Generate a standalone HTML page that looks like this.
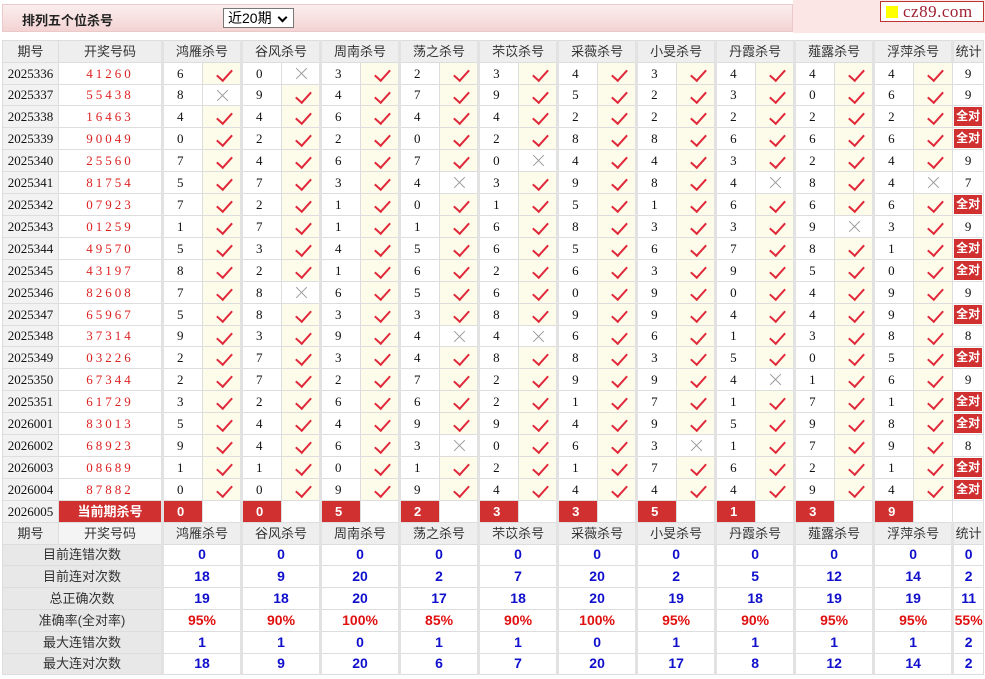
<!DOCTYPE html>
<html><head><meta charset="utf-8">
<style>
*{margin:0;padding:0;box-sizing:border-box}
body{width:985px;height:679px;background:#fff;position:relative;overflow:hidden;font-family:"Liberation Sans","Noto Sans CJK SC",sans-serif}
.bar{position:absolute;left:2px;top:4px;width:791px;height:28px;background:linear-gradient(#fbeeee,#f4d3d3);border:1px solid #ecc9c9}
.title{position:absolute;left:22px;top:10px;font-size:13px;font-weight:bold;color:#222}
.sel{position:absolute;left:223px;top:8px;width:71px;height:20px;border:1px solid #777;background:#fff;font-size:14px;padding-left:4px;line-height:18px;color:#000}
.sel:after{content:"";position:absolute;right:7px;top:5px;width:5px;height:5px;border-right:2px solid #000;border-bottom:2px solid #000;transform:rotate(45deg)}
.rbg{position:absolute;left:793px;top:0;width:192px;height:33px;background:#fbe5e5}
.logo{position:absolute;left:880px;top:1px;width:104px;height:21px;border:1px solid #b33;background:#fff;font-family:"Liberation Serif",serif;font-size:17px;color:#a02030;line-height:19px;padding-left:22px;letter-spacing:.5px}
.logo:before{content:"";position:absolute;left:5px;top:4px;width:12px;height:12px;background:#ff0}
table{position:absolute;left:2px;top:40px;border-collapse:collapse;table-layout:fixed;width:981px}
td{height:21.8px;border:1px solid #ddd;text-align:center;font-family:"Liberation Serif",serif;font-size:13px;color:#111;padding:0;position:relative;line-height:19px}
td.p{background:#f2f2f2;font-size:13px}
td.k{color:#d22;letter-spacing:3px;font-size:13px}
td.v{text-align:left;padding-left:13px;border-left:3px solid #e2e2e2}
td.y{background:#fdfbe9}
td.y:after{content:"";position:absolute;left:17px;top:3px;width:7px;height:13px;border-right:2px solid #e0283a;border-bottom:2px solid #e0283a;transform:rotate(42deg)}
td.n:before,td.n:after{content:"";position:absolute;left:12px;top:10px;width:15px;height:1px;background:#999;transform:rotate(45deg)}
td.n:after{transform:rotate(-45deg)}
tr.h td{background:#eee;font-family:"Liberation Sans","Noto Sans CJK SC",sans-serif;color:#333;font-size:13px}
tr.h td.g{border-left:3px solid #e2e2e2}
td.a{padding:1px}
td.a b{display:block;background:#d03030;color:#fff;font-family:"Liberation Sans","Noto Sans CJK SC",sans-serif;font-size:12px;height:19px;line-height:19px}
td.c{background:#d03030;color:#fff;font-family:"Liberation Sans","Noto Sans CJK SC",sans-serif;font-weight:bold;font-size:13px}
td.cn{background:#d03030;color:#fff;font-weight:bold;font-family:"Liberation Sans",sans-serif;text-align:left;padding-left:13px;border-left:3px solid #e2e2e2}
tr.s td{font-family:"Liberation Sans",sans-serif;font-weight:bold;color:#1010cc;font-size:14px}
tr.s td.l{background:#e8e8e8;color:#333;font-weight:normal;font-family:"Liberation Sans","Noto Sans CJK SC",sans-serif;font-size:13px}
tr.s td.g{border-left:3px solid #e2e2e2}
tr.r td{color:#e01010}
tr.r td.l{color:#333}
</style></head><body>
<div class="bar"></div>
<div class="title">排列五个位杀号</div>
<div class="sel">近20期</div>
<div class="rbg"></div>
<div class="logo">cz89.com</div>
<table>
<colgroup><col style="width:56px"><col style="width:104px"><col span="20" style="width:39.5px"><col style="width:31px"></colgroup>
<tr class="h"><td>期号</td><td>开奖号码</td><td colspan="2" class="g">鸿雁杀号</td><td colspan="2" class="g">谷风杀号</td><td colspan="2" class="g">周南杀号</td><td colspan="2" class="g">荡之杀号</td><td colspan="2" class="g">芣苡杀号</td><td colspan="2" class="g">采薇杀号</td><td colspan="2" class="g">小旻杀号</td><td colspan="2" class="g">丹霞杀号</td><td colspan="2" class="g">薤露杀号</td><td colspan="2" class="g">浮萍杀号</td><td class="g">统计</td></tr>
<tr><td class="p">2025336</td><td class="k">41260</td><td class="v">6</td><td class="y"></td><td class="v">0</td><td class="n"></td><td class="v">3</td><td class="y"></td><td class="v">2</td><td class="y"></td><td class="v">3</td><td class="y"></td><td class="v">4</td><td class="y"></td><td class="v">3</td><td class="y"></td><td class="v">4</td><td class="y"></td><td class="v">4</td><td class="y"></td><td class="v">4</td><td class="y"></td><td>9</td></tr>
<tr><td class="p">2025337</td><td class="k">55438</td><td class="v">8</td><td class="n"></td><td class="v">9</td><td class="y"></td><td class="v">4</td><td class="y"></td><td class="v">7</td><td class="y"></td><td class="v">9</td><td class="y"></td><td class="v">5</td><td class="y"></td><td class="v">2</td><td class="y"></td><td class="v">3</td><td class="y"></td><td class="v">0</td><td class="y"></td><td class="v">6</td><td class="y"></td><td>9</td></tr>
<tr><td class="p">2025338</td><td class="k">16463</td><td class="v">4</td><td class="y"></td><td class="v">4</td><td class="y"></td><td class="v">6</td><td class="y"></td><td class="v">4</td><td class="y"></td><td class="v">4</td><td class="y"></td><td class="v">2</td><td class="y"></td><td class="v">2</td><td class="y"></td><td class="v">2</td><td class="y"></td><td class="v">2</td><td class="y"></td><td class="v">2</td><td class="y"></td><td class="a"><b>全对</b></td></tr>
<tr><td class="p">2025339</td><td class="k">90049</td><td class="v">0</td><td class="y"></td><td class="v">2</td><td class="y"></td><td class="v">2</td><td class="y"></td><td class="v">0</td><td class="y"></td><td class="v">2</td><td class="y"></td><td class="v">8</td><td class="y"></td><td class="v">8</td><td class="y"></td><td class="v">6</td><td class="y"></td><td class="v">6</td><td class="y"></td><td class="v">6</td><td class="y"></td><td class="a"><b>全对</b></td></tr>
<tr><td class="p">2025340</td><td class="k">25560</td><td class="v">7</td><td class="y"></td><td class="v">4</td><td class="y"></td><td class="v">6</td><td class="y"></td><td class="v">7</td><td class="y"></td><td class="v">0</td><td class="n"></td><td class="v">4</td><td class="y"></td><td class="v">4</td><td class="y"></td><td class="v">3</td><td class="y"></td><td class="v">2</td><td class="y"></td><td class="v">4</td><td class="y"></td><td>9</td></tr>
<tr><td class="p">2025341</td><td class="k">81754</td><td class="v">5</td><td class="y"></td><td class="v">7</td><td class="y"></td><td class="v">3</td><td class="y"></td><td class="v">4</td><td class="n"></td><td class="v">3</td><td class="y"></td><td class="v">9</td><td class="y"></td><td class="v">8</td><td class="y"></td><td class="v">4</td><td class="n"></td><td class="v">8</td><td class="y"></td><td class="v">4</td><td class="n"></td><td>7</td></tr>
<tr><td class="p">2025342</td><td class="k">07923</td><td class="v">7</td><td class="y"></td><td class="v">2</td><td class="y"></td><td class="v">1</td><td class="y"></td><td class="v">0</td><td class="y"></td><td class="v">1</td><td class="y"></td><td class="v">5</td><td class="y"></td><td class="v">1</td><td class="y"></td><td class="v">6</td><td class="y"></td><td class="v">6</td><td class="y"></td><td class="v">6</td><td class="y"></td><td class="a"><b>全对</b></td></tr>
<tr><td class="p">2025343</td><td class="k">01259</td><td class="v">1</td><td class="y"></td><td class="v">7</td><td class="y"></td><td class="v">1</td><td class="y"></td><td class="v">1</td><td class="y"></td><td class="v">6</td><td class="y"></td><td class="v">8</td><td class="y"></td><td class="v">3</td><td class="y"></td><td class="v">3</td><td class="y"></td><td class="v">9</td><td class="n"></td><td class="v">3</td><td class="y"></td><td>9</td></tr>
<tr><td class="p">2025344</td><td class="k">49570</td><td class="v">5</td><td class="y"></td><td class="v">3</td><td class="y"></td><td class="v">4</td><td class="y"></td><td class="v">5</td><td class="y"></td><td class="v">6</td><td class="y"></td><td class="v">5</td><td class="y"></td><td class="v">6</td><td class="y"></td><td class="v">7</td><td class="y"></td><td class="v">8</td><td class="y"></td><td class="v">1</td><td class="y"></td><td class="a"><b>全对</b></td></tr>
<tr><td class="p">2025345</td><td class="k">43197</td><td class="v">8</td><td class="y"></td><td class="v">2</td><td class="y"></td><td class="v">1</td><td class="y"></td><td class="v">6</td><td class="y"></td><td class="v">2</td><td class="y"></td><td class="v">6</td><td class="y"></td><td class="v">3</td><td class="y"></td><td class="v">9</td><td class="y"></td><td class="v">5</td><td class="y"></td><td class="v">0</td><td class="y"></td><td class="a"><b>全对</b></td></tr>
<tr><td class="p">2025346</td><td class="k">82608</td><td class="v">7</td><td class="y"></td><td class="v">8</td><td class="n"></td><td class="v">6</td><td class="y"></td><td class="v">5</td><td class="y"></td><td class="v">6</td><td class="y"></td><td class="v">0</td><td class="y"></td><td class="v">9</td><td class="y"></td><td class="v">0</td><td class="y"></td><td class="v">4</td><td class="y"></td><td class="v">9</td><td class="y"></td><td>9</td></tr>
<tr><td class="p">2025347</td><td class="k">65967</td><td class="v">5</td><td class="y"></td><td class="v">8</td><td class="y"></td><td class="v">3</td><td class="y"></td><td class="v">3</td><td class="y"></td><td class="v">8</td><td class="y"></td><td class="v">9</td><td class="y"></td><td class="v">9</td><td class="y"></td><td class="v">4</td><td class="y"></td><td class="v">4</td><td class="y"></td><td class="v">9</td><td class="y"></td><td class="a"><b>全对</b></td></tr>
<tr><td class="p">2025348</td><td class="k">37314</td><td class="v">9</td><td class="y"></td><td class="v">3</td><td class="y"></td><td class="v">9</td><td class="y"></td><td class="v">4</td><td class="n"></td><td class="v">4</td><td class="n"></td><td class="v">6</td><td class="y"></td><td class="v">6</td><td class="y"></td><td class="v">1</td><td class="y"></td><td class="v">3</td><td class="y"></td><td class="v">8</td><td class="y"></td><td>8</td></tr>
<tr><td class="p">2025349</td><td class="k">03226</td><td class="v">2</td><td class="y"></td><td class="v">7</td><td class="y"></td><td class="v">3</td><td class="y"></td><td class="v">4</td><td class="y"></td><td class="v">8</td><td class="y"></td><td class="v">8</td><td class="y"></td><td class="v">3</td><td class="y"></td><td class="v">5</td><td class="y"></td><td class="v">0</td><td class="y"></td><td class="v">5</td><td class="y"></td><td class="a"><b>全对</b></td></tr>
<tr><td class="p">2025350</td><td class="k">67344</td><td class="v">2</td><td class="y"></td><td class="v">7</td><td class="y"></td><td class="v">2</td><td class="y"></td><td class="v">7</td><td class="y"></td><td class="v">2</td><td class="y"></td><td class="v">9</td><td class="y"></td><td class="v">9</td><td class="y"></td><td class="v">4</td><td class="n"></td><td class="v">1</td><td class="y"></td><td class="v">6</td><td class="y"></td><td>9</td></tr>
<tr><td class="p">2025351</td><td class="k">61729</td><td class="v">3</td><td class="y"></td><td class="v">2</td><td class="y"></td><td class="v">6</td><td class="y"></td><td class="v">6</td><td class="y"></td><td class="v">2</td><td class="y"></td><td class="v">1</td><td class="y"></td><td class="v">7</td><td class="y"></td><td class="v">1</td><td class="y"></td><td class="v">7</td><td class="y"></td><td class="v">1</td><td class="y"></td><td class="a"><b>全对</b></td></tr>
<tr><td class="p">2026001</td><td class="k">83013</td><td class="v">5</td><td class="y"></td><td class="v">4</td><td class="y"></td><td class="v">4</td><td class="y"></td><td class="v">9</td><td class="y"></td><td class="v">9</td><td class="y"></td><td class="v">4</td><td class="y"></td><td class="v">9</td><td class="y"></td><td class="v">5</td><td class="y"></td><td class="v">9</td><td class="y"></td><td class="v">8</td><td class="y"></td><td class="a"><b>全对</b></td></tr>
<tr><td class="p">2026002</td><td class="k">68923</td><td class="v">9</td><td class="y"></td><td class="v">4</td><td class="y"></td><td class="v">6</td><td class="y"></td><td class="v">3</td><td class="n"></td><td class="v">0</td><td class="y"></td><td class="v">6</td><td class="y"></td><td class="v">3</td><td class="n"></td><td class="v">1</td><td class="y"></td><td class="v">7</td><td class="y"></td><td class="v">9</td><td class="y"></td><td>8</td></tr>
<tr><td class="p">2026003</td><td class="k">08689</td><td class="v">1</td><td class="y"></td><td class="v">1</td><td class="y"></td><td class="v">0</td><td class="y"></td><td class="v">1</td><td class="y"></td><td class="v">2</td><td class="y"></td><td class="v">1</td><td class="y"></td><td class="v">7</td><td class="y"></td><td class="v">6</td><td class="y"></td><td class="v">2</td><td class="y"></td><td class="v">1</td><td class="y"></td><td class="a"><b>全对</b></td></tr>
<tr><td class="p">2026004</td><td class="k">87882</td><td class="v">0</td><td class="y"></td><td class="v">0</td><td class="y"></td><td class="v">9</td><td class="y"></td><td class="v">9</td><td class="y"></td><td class="v">4</td><td class="y"></td><td class="v">4</td><td class="y"></td><td class="v">4</td><td class="y"></td><td class="v">4</td><td class="y"></td><td class="v">9</td><td class="y"></td><td class="v">4</td><td class="y"></td><td class="a"><b>全对</b></td></tr>
<tr><td class="p">2026005</td><td class="c">当前期杀号</td><td class="cn">0</td><td></td><td class="cn">0</td><td></td><td class="cn">5</td><td></td><td class="cn">2</td><td></td><td class="cn">3</td><td></td><td class="cn">3</td><td></td><td class="cn">5</td><td></td><td class="cn">1</td><td></td><td class="cn">3</td><td></td><td class="cn">9</td><td></td><td></td></tr>
<tr class="h"><td>期号</td><td style="background:#f4f4f4">开奖号码</td><td colspan="2" class="g">鸿雁杀号</td><td colspan="2" class="g">谷风杀号</td><td colspan="2" class="g">周南杀号</td><td colspan="2" class="g">荡之杀号</td><td colspan="2" class="g">芣苡杀号</td><td colspan="2" class="g">采薇杀号</td><td colspan="2" class="g">小旻杀号</td><td colspan="2" class="g">丹霞杀号</td><td colspan="2" class="g">薤露杀号</td><td colspan="2" class="g">浮萍杀号</td><td class="g">统计</td></tr>
<tr class="s"><td colspan="2" class="l">目前连错次数</td><td colspan="2" class="g">0</td><td colspan="2" class="g">0</td><td colspan="2" class="g">0</td><td colspan="2" class="g">0</td><td colspan="2" class="g">0</td><td colspan="2" class="g">0</td><td colspan="2" class="g">0</td><td colspan="2" class="g">0</td><td colspan="2" class="g">0</td><td colspan="2" class="g">0</td><td class="g">0</td></tr>
<tr class="s"><td colspan="2" class="l">目前连对次数</td><td colspan="2" class="g">18</td><td colspan="2" class="g">9</td><td colspan="2" class="g">20</td><td colspan="2" class="g">2</td><td colspan="2" class="g">7</td><td colspan="2" class="g">20</td><td colspan="2" class="g">2</td><td colspan="2" class="g">5</td><td colspan="2" class="g">12</td><td colspan="2" class="g">14</td><td class="g">2</td></tr>
<tr class="s"><td colspan="2" class="l">总正确次数</td><td colspan="2" class="g">19</td><td colspan="2" class="g">18</td><td colspan="2" class="g">20</td><td colspan="2" class="g">17</td><td colspan="2" class="g">18</td><td colspan="2" class="g">20</td><td colspan="2" class="g">19</td><td colspan="2" class="g">18</td><td colspan="2" class="g">19</td><td colspan="2" class="g">19</td><td class="g">11</td></tr>
<tr class="s r"><td colspan="2" class="l">准确率(全对率)</td><td colspan="2" class="g">95%</td><td colspan="2" class="g">90%</td><td colspan="2" class="g">100%</td><td colspan="2" class="g">85%</td><td colspan="2" class="g">90%</td><td colspan="2" class="g">100%</td><td colspan="2" class="g">95%</td><td colspan="2" class="g">90%</td><td colspan="2" class="g">95%</td><td colspan="2" class="g">95%</td><td class="g">55%</td></tr>
<tr class="s"><td colspan="2" class="l">最大连错次数</td><td colspan="2" class="g">1</td><td colspan="2" class="g">1</td><td colspan="2" class="g">0</td><td colspan="2" class="g">1</td><td colspan="2" class="g">1</td><td colspan="2" class="g">0</td><td colspan="2" class="g">1</td><td colspan="2" class="g">1</td><td colspan="2" class="g">1</td><td colspan="2" class="g">1</td><td class="g">2</td></tr>
<tr class="s"><td colspan="2" class="l">最大连对次数</td><td colspan="2" class="g">18</td><td colspan="2" class="g">9</td><td colspan="2" class="g">20</td><td colspan="2" class="g">6</td><td colspan="2" class="g">7</td><td colspan="2" class="g">20</td><td colspan="2" class="g">17</td><td colspan="2" class="g">8</td><td colspan="2" class="g">12</td><td colspan="2" class="g">14</td><td class="g">2</td></tr>
</table>
</body></html>
